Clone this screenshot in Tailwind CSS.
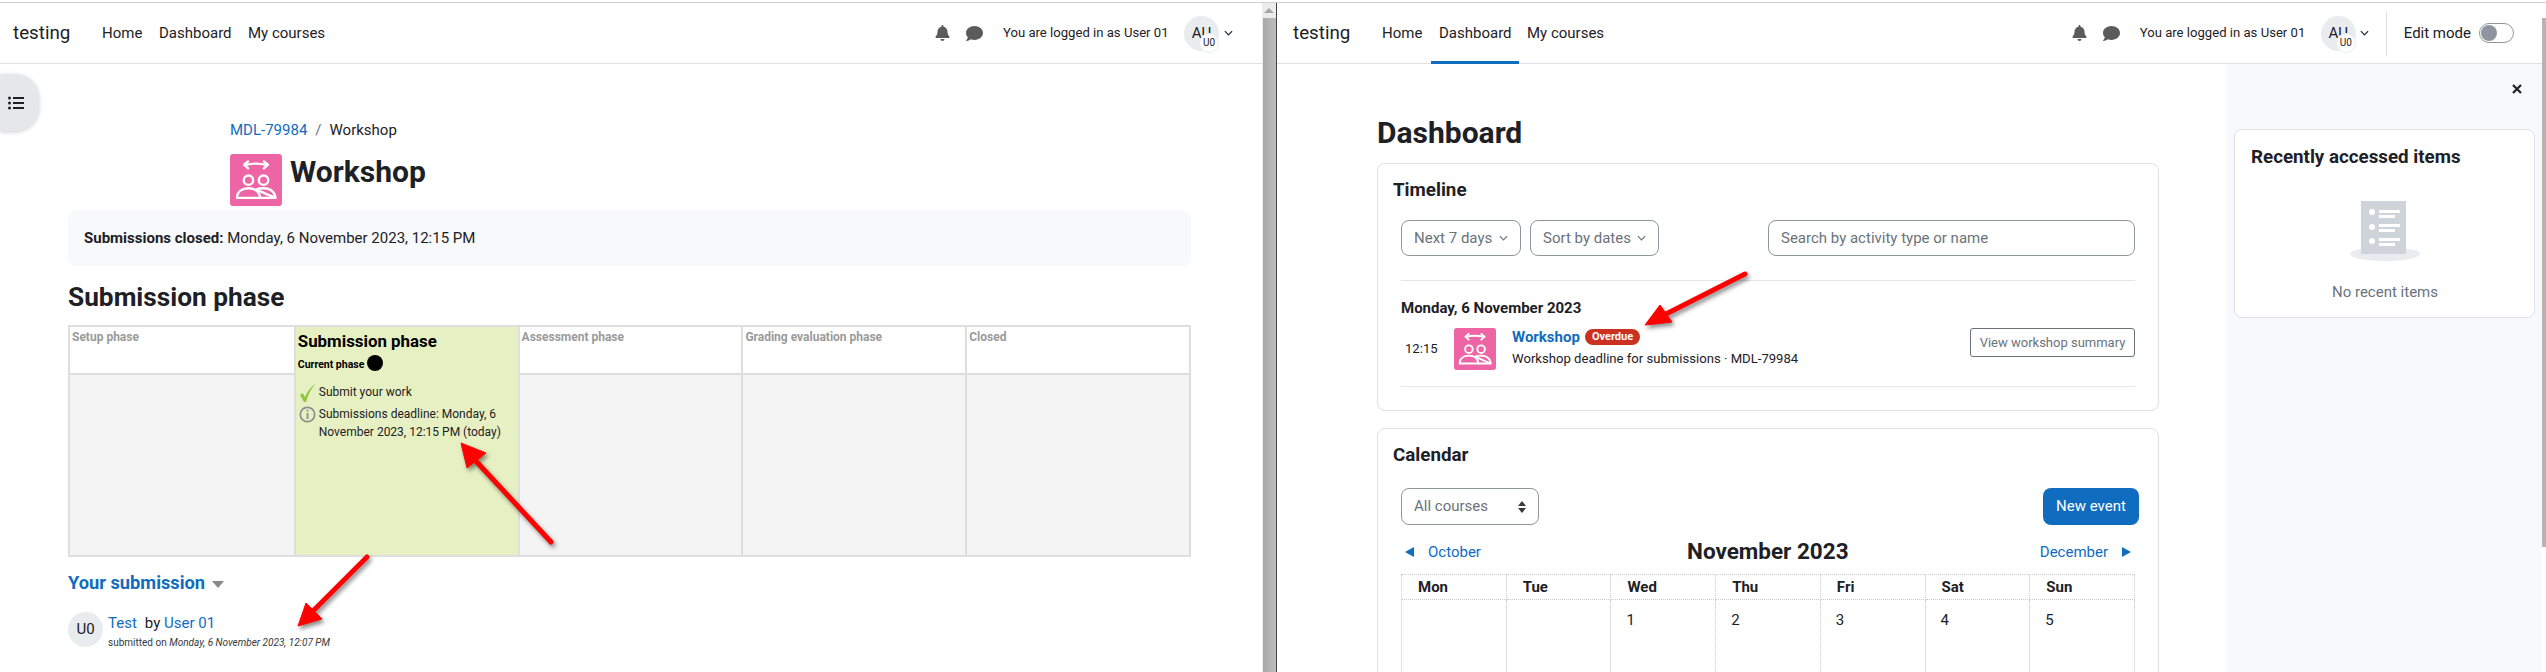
<!DOCTYPE html>
<html lang="en">
<head>
  <meta charset="UTF-8">
  <title>Moodle workshop and dashboard</title>
  <script src="https://cdn.jsdelivr.net/npm/@tailwindcss/browser@4"></script>
</head>
<body class="bg-white">
  <svg width="0" height="0" class="absolute">
    <symbol id="workshop" viewBox="0 0 155 155">
      <rect width="155" height="155" rx="10" fill="#ee65a6"/>
      <g fill="none" stroke="#fff" stroke-width="7" stroke-linecap="round" stroke-linejoin="round">
        <path d="M44 33Q77 24 111 33"/>
        <path d="M54 22L42 32L54 43"/>
        <path d="M101 22L113 32L101 43"/>
        <circle cx="55" cy="78" r="14"/>
        <circle cx="100" cy="78" r="14"/>
        <path d="M21 131C21 112 36 102 55 102C74 102 88 112 90 131"/>
        <path d="M78 106C84 103 92 102 100 102C120 102 135 113 135 131Z"/>
        <path d="M21 131H135"/>
      </g>
    </symbol>
    <symbol id="bell" viewBox="0 0 448 512">
      <path fill="currentColor" d="M224 512c35.32 0 63.97-28.65 63.97-64H160.03c0 35.35 28.65 64 63.97 64zm215.39-149.71c-19.32-20.76-55.47-51.99-55.47-154.29 0-77.7-54.48-139.9-127.94-155.16V32c0-17.67-14.32-32-31.98-32s-31.98 14.33-31.98 32v20.84C118.56 68.1 64.08 130.3 64.08 208c0 102.3-36.15 133.53-55.47 154.29-6 6.45-8.66 14.16-8.61 21.71.11 16.4 12.98 32 32.1 32h383.8c19.12 0 32-15.6 32.1-32 .05-7.55-2.61-15.27-8.61-21.71z"/>
    </symbol>
    <symbol id="chat" viewBox="0 0 512 512">
      <path fill="currentColor" d="M256 32C114.6 32 0 125.1 0 240c0 49.6 21.4 95 57 130.7C44.5 421.1 2.7 466 2.2 466.5c-2.2 2.3-2.8 5.7-1.5 8.7S4.8 480 8 480c66.3 0 116-31.8 140.6-51.4 32.7 12.3 69 19.4 107.4 19.4 141.4 0 256-93.1 256-208S397.4 32 256 32z"/>
    </symbol>
    <symbol id="chevron" viewBox="0 0 10 6">
      <path d="M1 1L5 5L9 1" fill="none" stroke="currentColor" stroke-width="1.3"/>
    </symbol>
  </svg>

  <div class="relative w-[2546px] h-[672px] overflow-hidden bg-white text-[#1d2125] text-[15px] font-['Roboto',sans-serif]">
    <div class="h-[3px] border-b border-[#cfcfcf]"></div>

    <div class="flex h-[669px]">
      <!-- left window -->
      <div class="relative w-[1262px] shrink-0">
        <header class="flex items-center h-[61px] border-b border-[#dee2e6] pl-[13px]">
          <span class="text-[18.75px] w-[89px]">testing</span>
          <nav class="flex">
            <a class="w-[57px]">Home</a>
            <a class="w-[89px]">Dashboard</a>
            <a>My courses</a>
          </nav>
          <div class="ml-auto flex items-center text-[#5b5b5b]">
            <svg class="w-[15px] h-[16px]"><use href="#bell"/></svg>
            <svg class="w-[17px] h-[17px] ml-[16px]"><use href="#chat"/></svg>
            <span class="ml-[20px] w-[181px] text-[13.125px] text-[#1d2125]">You are logged in as User 01</span>
            <div class="relative w-[35px] h-[35px] rounded-full bg-[#e9ecef] flex items-center justify-center text-[#1d2125] text-[15px]">
              AU
              <span class="absolute left-[15px] top-[17px] w-[20px] h-[20px] rounded-full bg-white border border-[#e9ecef] flex items-center justify-center text-[10px]">U0</span>
            </div>
            <svg class="w-[9px] h-[6px] ml-[5px] mr-[29px] text-[#1d2125]"><use href="#chevron"/></svg>
          </div>
        </header>

        <div class="absolute left-0 top-[71px] w-[39px] h-[57px] bg-[#e5e8eb] rounded-r-[24px] shadow-[0_1px_4px_rgba(0,0,0,0.2)] flex items-center pl-[8px]">
          <svg width="16" height="14" viewBox="0 0 16 14" fill="#1d2125">
            <circle cx="1.5" cy="2" r="1.5"/><circle cx="1.5" cy="7" r="1.5"/><circle cx="1.5" cy="12" r="1.5"/>
            <rect x="5" y="1" width="11" height="2"/><rect x="5" y="6" width="11" height="2"/><rect x="5" y="11" width="11" height="2"/>
          </svg>
        </div>

        <main class="w-[1123px] ml-[68px]">
          <div class="flex items-center h-[22px] mt-[55px] ml-[162px]">
            <a class="text-[#0f6cbf]">MDL-79984</a>
            <span class="mx-[8px] text-[#6a737b]">/</span>
            <span>Workshop</span>
          </div>
          <div class="flex mt-[13px] ml-[162px]">
            <svg class="w-[52px] h-[52px]"><use href="#workshop"/></svg>
            <h1 class="ml-[8px] h-[36px] leading-[36px] text-[30px] font-bold">Workshop</h1>
          </div>
          <div class="flex items-center h-[55px] mt-[5px] pl-[16px] bg-[#f8f9fa] rounded-[8px]">
            <p><strong class="font-bold">Submissions closed:</strong> Monday, 6 November 2023, 12:15 PM</p>
          </div>
          <h2 class="h-[34px] leading-[34px] mt-[14px] text-[26.25px] font-bold">Submission phase</h2>

          <div class="grid grid-cols-5 h-[232px] mt-[11px] border-2 border-[#dedede] text-[12px]">
            <div class="flex flex-col">
              <div class="h-[48px] pl-[2px] pt-[1px] font-bold text-[#9a9a9a] border-b-2 border-[#dedede]">Setup phase</div>
              <div class="flex-1 bg-[#f4f4f4]"></div>
            </div>
            <div class="flex flex-col bg-[#e7f0c3] border-l-2 border-[#dedede] pl-[2px] text-black">
              <div class="h-[48px] pt-[3px]">
                <div class="text-[16.875px] leading-[22px] font-bold">Submission phase</div>
                <div class="flex items-center h-[18px] mt-[4px] text-[10.5px] font-bold">Current phase<span class="ml-[3px] -mt-[4px] w-[16px] h-[16px] rounded-full bg-black"></span></div>
              </div>
              <div class="pt-[8px] text-[12px] leading-[18px] text-[#1d2125]">
                <div class="flex">
                  <svg class="w-[17px] h-[18px] shrink-0 ml-[1px] mt-[1px]" viewBox="0 0 17 18"><path d="M1 11L3.5 9L6 13C8 8 12 3 16 0C12 5 9 11 7 18H5Z" fill="#8ec63f"/></svg>
                  <span class="ml-[3px]">Submit your work</span>
                </div>
                <div class="flex mt-[3px]">
                  <svg class="w-[17px] h-[17px] shrink-0 ml-[1px] mt-[1px]" viewBox="0 0 17 17"><circle cx="8.5" cy="8.5" r="7.2" fill="none" stroke="#8e8e8e" stroke-width="1.7"/><rect x="7.6" y="7" width="1.8" height="6" fill="#8e8e8e"/><rect x="7.6" y="3.8" width="1.8" height="1.8" fill="#8e8e8e"/></svg>
                  <span class="ml-[3px] w-[190px]">Submissions deadline: Monday, 6 November 2023, 12:15 PM (today)</span>
                </div>
              </div>
            </div>
            <div class="flex flex-col border-l-2 border-[#dedede]">
              <div class="h-[48px] pl-[2px] pt-[1px] font-bold text-[#9a9a9a] border-b-2 border-[#dedede]">Assessment phase</div>
              <div class="flex-1 bg-[#f4f4f4]"></div>
            </div>
            <div class="flex flex-col border-l-2 border-[#dedede]">
              <div class="h-[48px] pl-[2px] pt-[1px] font-bold text-[#9a9a9a] border-b-2 border-[#dedede]">Grading evaluation phase</div>
              <div class="flex-1 bg-[#f4f4f4]"></div>
            </div>
            <div class="flex flex-col border-l-2 border-[#dedede]">
              <div class="h-[48px] pl-[2px] pt-[1px] font-bold text-[#9a9a9a] border-b-2 border-[#dedede]">Closed</div>
              <div class="flex-1 bg-[#f4f4f4]"></div>
            </div>
          </div>

          <div class="flex items-center h-[26px] mt-[13px]">
            <span class="text-[18.25px] font-bold text-[#0f6cbf]">Your submission</span>
            <span class="ml-[7px] mt-[2px] w-0 h-0 border-x-[6px] border-x-transparent border-t-[7px] border-t-[#8a8a8a]"></span>
          </div>

          <div class="flex mt-[16px]">
            <div class="w-[35px] h-[35px] rounded-full bg-[#e9ecef] flex items-center justify-center">U0</div>
            <div class="ml-[5px]">
              <div class="h-[22px] leading-[22px]"><a class="text-[#0f6cbf]">Test</a><span class="ml-[8px]">by</span> <a class="text-[#0f6cbf]">User 01</a></div>
              <div class="h-[16px] leading-[16px] mt-[1px] text-[10px] text-[#343a40]">submitted on <em>Monday, 6 November 2023, 12:07 PM</em></div>
            </div>
          </div>
        </main>
      </div>

      <!-- scrollbar and window edge -->
      <div class="w-[15px] shrink-0 bg-[#ececec] flex flex-col border-r border-[#4a3f3f]">
        <div class="h-[15px] flex items-center justify-center"><span class="w-0 h-0 border-x-[5px] border-x-transparent border-b-[5px] border-b-[#a5a5a5]"></span></div>
        <div class="flex-1 ml-px bg-gradient-to-r from-[#a8a8a8] to-[#bdbdbd]"></div>
      </div>

      <!-- right window -->
      <div class="flex-1 min-w-0">
        <header class="flex items-center h-[61px] border-b border-[#dee2e6] pl-[16px]">
          <span class="text-[18.75px] w-[89px]">testing</span>
          <nav class="flex self-stretch items-center relative">
            <a class="w-[57px]">Home</a>
            <a class="w-[88px]">Dashboard</a>
            <a>My courses</a>
            <span class="absolute left-[49px] bottom-[-1px] w-[88px] h-[3px] bg-[#0f6cbf]"></span>
          </nav>
          <div class="ml-auto flex items-center text-[#5b5b5b]">
            <svg class="w-[15px] h-[16px]"><use href="#bell"/></svg>
            <svg class="w-[17px] h-[17px] ml-[16px]"><use href="#chat"/></svg>
            <span class="ml-[20px] w-[181px] text-[13.125px] text-[#1d2125]">You are logged in as User 01</span>
            <div class="relative w-[35px] h-[35px] rounded-full bg-[#e9ecef] flex items-center justify-center text-[#1d2125] text-[15px]">
              AU
              <span class="absolute left-[15px] top-[17px] w-[20px] h-[20px] rounded-full bg-white border border-[#e9ecef] flex items-center justify-center text-[10px]">U0</span>
            </div>
            <svg class="w-[9px] h-[6px] ml-[4px] text-[#1d2125]"><use href="#chevron"/></svg>
            <span class="ml-[17px] w-px h-[45px] bg-[#dee2e6]"></span>
            <span class="ml-[17px] text-[#1d2125]">Edit mode</span>
            <span class="ml-[8px] mr-[28px] w-[35px] h-[20px] rounded-full border border-[#8f959e] bg-white flex items-center pl-[1px]"><span class="w-[16px] h-[16px] rounded-full bg-[#8f959e]"></span></span>
          </div>
        </header>

        <div class="flex h-[608px]">
          <main class="w-[950px] shrink-0 pl-[100px]">
            <h1 class="h-[38px] leading-[38px] mt-[50px] text-[30px] font-bold">Dashboard</h1>

            <section class="w-[782px] h-[248px] mt-[11px] border border-[#dee2e6] rounded-[8px] px-[15px] pt-[14px]">
              <h3 class="h-[24px] leading-[24px] text-[18.75px] font-bold">Timeline</h3>
              <div class="ml-[8px] w-[734px]">
                <div class="flex h-[36px] mt-[18px] text-[#6a737b]">
                  <div class="flex items-center justify-between w-[120px] border border-[#8f959e] rounded-[8px] px-[12px]">Next 7 days<svg class="w-[9px] h-[6px]"><use href="#chevron"/></svg></div>
                  <div class="flex items-center justify-between w-[129px] ml-[9px] border border-[#8f959e] rounded-[8px] px-[12px]">Sort by dates<svg class="w-[9px] h-[6px]"><use href="#chevron"/></svg></div>
                  <div class="flex items-center w-[367px] ml-auto border border-[#8f959e] rounded-[8px] px-[12px]">Search by activity type or name</div>
                </div>
                <div class="h-px mt-[24px] bg-[#e3e5e8]"></div>
                <div class="h-[20px] leading-[20px] mt-[17px] font-bold">Monday, 6 November 2023</div>
                <div class="flex h-[42px] mt-[10px]">
                  <span class="w-[53px] pl-[4px] self-center text-[13.125px]">12:15</span>
                  <svg class="w-[42px] h-[42px]"><use href="#workshop"/></svg>
                  <div class="ml-[16px]">
                    <div class="flex items-center h-[18px]">
                      <a class="font-bold text-[#0f6cbf]">Workshop</a>
                      <span class="ml-[5px] h-[16px] leading-[16px] px-[7px] rounded-full bg-[#ca3120] text-white text-[11px] font-bold">Overdue</span>
                    </div>
                    <p class="mt-[3px] h-[20px] leading-[20px] text-[13.125px]">Workshop deadline for submissions · MDL-79984</p>
                  </div>
                  <div class="ml-auto h-[29px] w-[165px] flex items-center justify-center border border-[#6a737b] rounded-[3px] text-[13px] text-[#6a737b]">View workshop summary</div>
                </div>
                <div class="h-px mt-[16px] bg-[#e3e5e8]"></div>
              </div>
            </section>

            <section class="w-[782px] h-[300px] mt-[17px] border border-[#dee2e6] rounded-[8px] px-[15px] pt-[14px]">
              <h3 class="h-[24px] leading-[24px] text-[18.75px] font-bold">Calendar</h3>
              <div class="ml-[8px] w-[734px]">
                <div class="flex justify-between h-[37px] mt-[21px]">
                  <div class="flex items-center justify-between w-[138px] border border-[#8f959e] rounded-[8px] pl-[12px] pr-[12px] text-[#6a737b]">All courses
                    <svg width="8" height="12" viewBox="0 0 8 12" fill="#343a40"><path d="M4 0L8 5H0Z"/><path d="M4 12L0 7H8Z"/></svg>
                  </div>
                  <div class="-mr-[4px] w-[96px] flex items-center justify-center rounded-[8px] bg-[#0f6cbf] text-white">New event</div>
                </div>
                <div class="relative flex items-center justify-between h-[28px] mt-[13px] text-[#0f6cbf] px-[4px]">
                  <div class="flex items-center"><span class="w-0 h-0 border-y-[5px] border-y-transparent border-r-[9px] border-r-[#0f6cbf]"></span><a class="ml-[14px]">October</a></div>
                  <h4 class="absolute left-[286px] text-[22.5px] font-bold text-[#1d2125]">November 2023</h4>
                  <div class="flex items-center"><a>December</a><span class="ml-[14px] w-0 h-0 border-y-[5px] border-y-transparent border-l-[9px] border-l-[#0f6cbf]"></span></div>
                </div>
                <div class="grid grid-cols-7 mt-[8px] border-l border-t border-dotted border-[#c9c9c9] w-[734px]">
                  <div class="h-[25px] leading-[24px] pl-[16px] font-bold border-r border-b border-dotted border-[#c9c9c9]">Mon</div>
                  <div class="h-[25px] leading-[24px] pl-[16px] font-bold border-r border-b border-dotted border-[#c9c9c9]">Tue</div>
                  <div class="h-[25px] leading-[24px] pl-[16px] font-bold border-r border-b border-dotted border-[#c9c9c9]">Wed</div>
                  <div class="h-[25px] leading-[24px] pl-[16px] font-bold border-r border-b border-dotted border-[#c9c9c9]">Thu</div>
                  <div class="h-[25px] leading-[24px] pl-[16px] font-bold border-r border-b border-dotted border-[#c9c9c9]">Fri</div>
                  <div class="h-[25px] leading-[24px] pl-[16px] font-bold border-r border-b border-dotted border-[#c9c9c9]">Sat</div>
                  <div class="h-[25px] leading-[24px] pl-[16px] font-bold border-r border-b border-dotted border-[#c9c9c9]">Sun</div>
                  <div class="h-[100px] border-r border-dotted border-[#c9c9c9]"></div>
                  <div class="h-[100px] border-r border-dotted border-[#c9c9c9]"></div>
                  <div class="h-[100px] pl-[15px] pt-[9px] border-r border-dotted border-[#c9c9c9]">1</div>
                  <div class="h-[100px] pl-[15px] pt-[9px] border-r border-dotted border-[#c9c9c9]">2</div>
                  <div class="h-[100px] pl-[15px] pt-[9px] border-r border-dotted border-[#c9c9c9]">3</div>
                  <div class="h-[100px] pl-[15px] pt-[9px] border-r border-dotted border-[#c9c9c9]">4</div>
                  <div class="h-[100px] pl-[15px] pt-[9px] border-r border-dotted border-[#c9c9c9]">5</div>
                </div>
              </div>
            </section>
          </main>

          <aside class="w-[315px] shrink-0 bg-[#f8f9fa] pl-[7px]">
            <div class="flex justify-end h-[65px] pr-[20px] pt-[20px]">
              <svg width="10" height="10" viewBox="0 0 10 10"><path d="M1 1L9 9M9 1L1 9" stroke="#1d2125" stroke-width="2.2"/></svg>
            </div>
            <div class="w-[301px] h-[189px] bg-white border border-[#dee2e6] rounded-[8px] pl-[16px] pt-[15px]">
              <h3 class="h-[24px] leading-[24px] text-[18.75px] font-bold">Recently accessed items</h3>
              <svg class="mt-[32px] ml-[98px]" width="72" height="60" viewBox="0 0 72 60">
                <ellipse cx="36" cy="53" rx="35" ry="7" fill="#e9ecef"/>
                <rect x="12" y="0" width="45" height="53" fill="#ced4da"/>
                <g fill="#fff">
                  <circle cx="23" cy="11" r="3"/><rect x="30" y="9" width="21" height="3"/><rect x="30" y="14" width="16" height="3"/>
                  <circle cx="23" cy="26" r="3"/><rect x="30" y="23" width="21" height="3"/><rect x="30" y="28" width="16" height="3"/>
                  <circle cx="23" cy="40" r="3"/><rect x="30" y="37" width="21" height="3"/><rect x="30" y="42" width="16" height="3"/>
                </g>
              </svg>
              <p class="mt-[20px] w-[268px] text-center text-[#6a737b]">No recent items</p>
            </div>
          </aside>
        </div>
      </div>

      <div class="w-[4px] shrink-0 flex flex-col">
        <div class="h-[15px] bg-white"></div>
        <div class="h-[529px] bg-[#b5b5b5]"></div>
      </div>
    </div>

    <!-- red annotation arrows drawn on top of the screenshot -->
    <svg class="absolute inset-0 w-full h-full pointer-events-none drop-shadow-[2px_3px_2px_rgba(0,0,0,0.45)]" viewBox="0 0 2546 672">
      <g fill="#f00" stroke="#f00" stroke-linejoin="round">
        <path d="M474 459L551 542" stroke-width="5" stroke-linecap="round"/>
        <path d="M461 443L486 453L467 468Z" stroke-width="1"/>
        <path d="M367 557L311 613" stroke-width="5" stroke-linecap="round"/>
        <path d="M298 626L306 603L322 619Z" stroke-width="1"/>
        <path d="M1745 274L1664 315" stroke-width="5" stroke-linecap="round"/>
        <path d="M1645 325L1660 305L1672 322Z" stroke-width="1"/>
      </g>
    </svg>
  </div>
</body>
</html>
